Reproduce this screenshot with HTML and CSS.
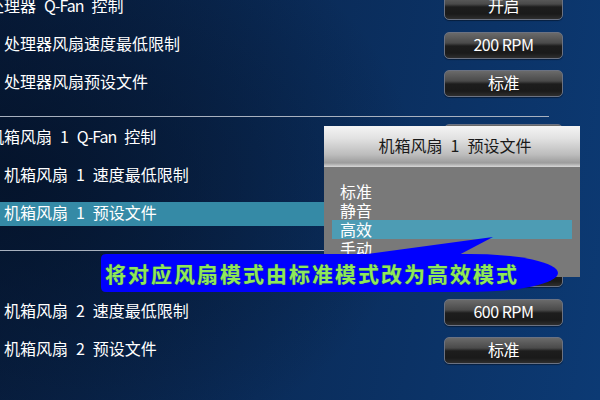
FILE: index.html
```html
<!DOCTYPE html>
<html>
<head>
<meta charset="utf-8">
<link rel="stylesheet" href="styles.css">
</head>
<body>
<div class="screen">
  <div class="list">
    <section class="group group-first">
      <div class="row row-head"><span class="label">处理器 <span class="lat">Q-Fan</span> 控制</span><span class="btn">开启</span></div>
      <div class="row"><span class="label">处理器风扇速度最低限制</span><span class="btn">200 RPM</span></div>
      <div class="row"><span class="label">处理器风扇预设文件</span><span class="btn">标准</span></div>
    </section>
    <section class="group group-second">
      <div class="row row-head"><span class="label">机箱风扇 1 <span class="lat">Q-Fan</span> 控制</span><span class="btn"></span></div>
      <div class="row"><span class="label">机箱风扇 1 速度最低限制</span><span class="btn"></span></div>
      <div class="row row-sel"><span class="label">机箱风扇 1 预设文件</span><span class="btn"></span></div>
    </section>
    <section class="group group-third">
      <div class="row row-head"><span class="label"></span><span class="btn"></span></div>
      <div class="row"><span class="label">机箱风扇 2 速度最低限制</span><span class="btn">600 RPM</span></div>
      <div class="row"><span class="label">机箱风扇 2 预设文件</span><span class="btn">标准</span></div>
    </section>
  </div>

  <div class="popup">
    <div class="popup-title">机箱风扇 1 预设文件</div>
    <ul class="options">
      <li>标准</li>
      <li>静音</li>
      <li class="active">高效</li>
      <li>手动</li>
    </ul>
  </div>

  <div class="callout">
    <svg class="callout-shape" width="470" height="70" viewBox="95 230 470 70">
      <path d="M360,255 L493,237 L455,257 Z" fill="#0000ff"/>
      <path d="M106,254 H470 A88,19 0 0 1 470,292 H106 Q101,292 101,287 V259 Q101,254 106,254 Z" fill="#0000ff"/>
    </svg>
    <div class="callout-text">将对应风扇模式由标准模式改为高效模式</div>
  </div>
</div>
</body>
</html>
```

FILE: styles.css
```css
html, body {
  margin: 0;
  padding: 0;
}

body {
  width: 600px;
  height: 400px;
  overflow: hidden;
  font-family: "Noto Sans CJK SC", "DejaVu Sans", sans-serif;
}

.screen {
  position: relative;
  width: 600px;
  height: 400px;
  overflow: hidden;
  background:
    radial-gradient(ellipse 420px 300px at 0% 45%, rgba(4, 18, 40, 0.85), rgba(4, 18, 40, 0) 100%),
    linear-gradient(100deg, #081d3d 0%, #0a2b58 45%, #0c3a74 100%);
}

.list {
  margin-top: -14px;
  width: 600px;
}

.group {
  border-bottom: 1px solid #a8b1bf;
  width: 549px;
}

.group-first {
  padding-bottom: 14px;
}

.group-second {
  padding-bottom: 17px;
}

.group-third {
  padding-top: 2px;
  border-bottom: none;
}

.row {
  height: 38px;
  display: flex;
  align-items: center;
  justify-content: space-between;
  width: 600px;
  box-sizing: border-box;
  padding-left: 4px;
  padding-right: 37px;
}

.row-head {
  height: 40px;
  padding-left: 0;
}

.label {
  color: #ffffff;
  font-size: 16px;
  line-height: 24px;
  word-spacing: 4.4px;
  white-space: nowrap;
  margin-bottom: 5px;
}

.row-head .label {
  margin-left: -12px;
  margin-bottom: 2px;
}

.lat {
  letter-spacing: -1px;
}

.row-sel .label {
  background: #358aa6;
  margin-left: -4px;
  margin-bottom: 0;
  padding-left: 4px;
  width: 330px;
  height: 24px;
  line-height: 20px;
}

.btn {
  width: 119px;
  height: 27px;
  box-sizing: border-box;
  border: 1px solid #6b7282;
  border-radius: 5px;
  background: linear-gradient(180deg, #6a6a6a 0%, #4a4a4a 40%, #1d1d1d 52%, #1a1a1a 80%, #2e2e2e 100%);
  color: #ffffff;
  font-size: 16px;
  letter-spacing: -0.5px;
  line-height: 23px;
  text-align: center;
  box-shadow: 0 1px 1px rgba(0, 0, 0, 0.4);
}

.popup {
  position: absolute;
  left: 324px;
  top: 126px;
  width: 256px;
  height: 151px;
  background: #797979;
}

.popup-title {
  height: 41px;
  line-height: 38px;
  text-align: center;
  color: #1a1a1a;
  font-size: 16px;
  word-spacing: 4.4px;
  padding-left: 6px;
  background: linear-gradient(180deg, #f4f4f4 0%, #e2e2e2 30%, #bcbcbc 70%, #9c9c9c 90%, #d8d8d8 100%);
}

.options {
  list-style: none;
  margin: 0;
  padding: 15px 8px 0 8px;
  height: 95px;
  overflow: hidden;
}

.options li {
  height: 19px;
  line-height: 18px;
  padding-left: 8px;
  color: #ffffff;
  font-size: 16px;
}

.options li.active {
  background: #4d9cb4;
}

.callout {
  position: absolute;
  left: 95px;
  top: 230px;
  width: 470px;
  height: 70px;
}

.callout-shape {
  display: block;
}

.callout-text {
  position: absolute;
  left: 10px;
  top: 30px;
  height: 26px;
  line-height: 26px;
  font-size: 21px;
  font-weight: 700;
  letter-spacing: 2px;
  color: #8ee85c;
  white-space: nowrap;
  text-shadow: 0 0 1px #3a7a20;
}
```
